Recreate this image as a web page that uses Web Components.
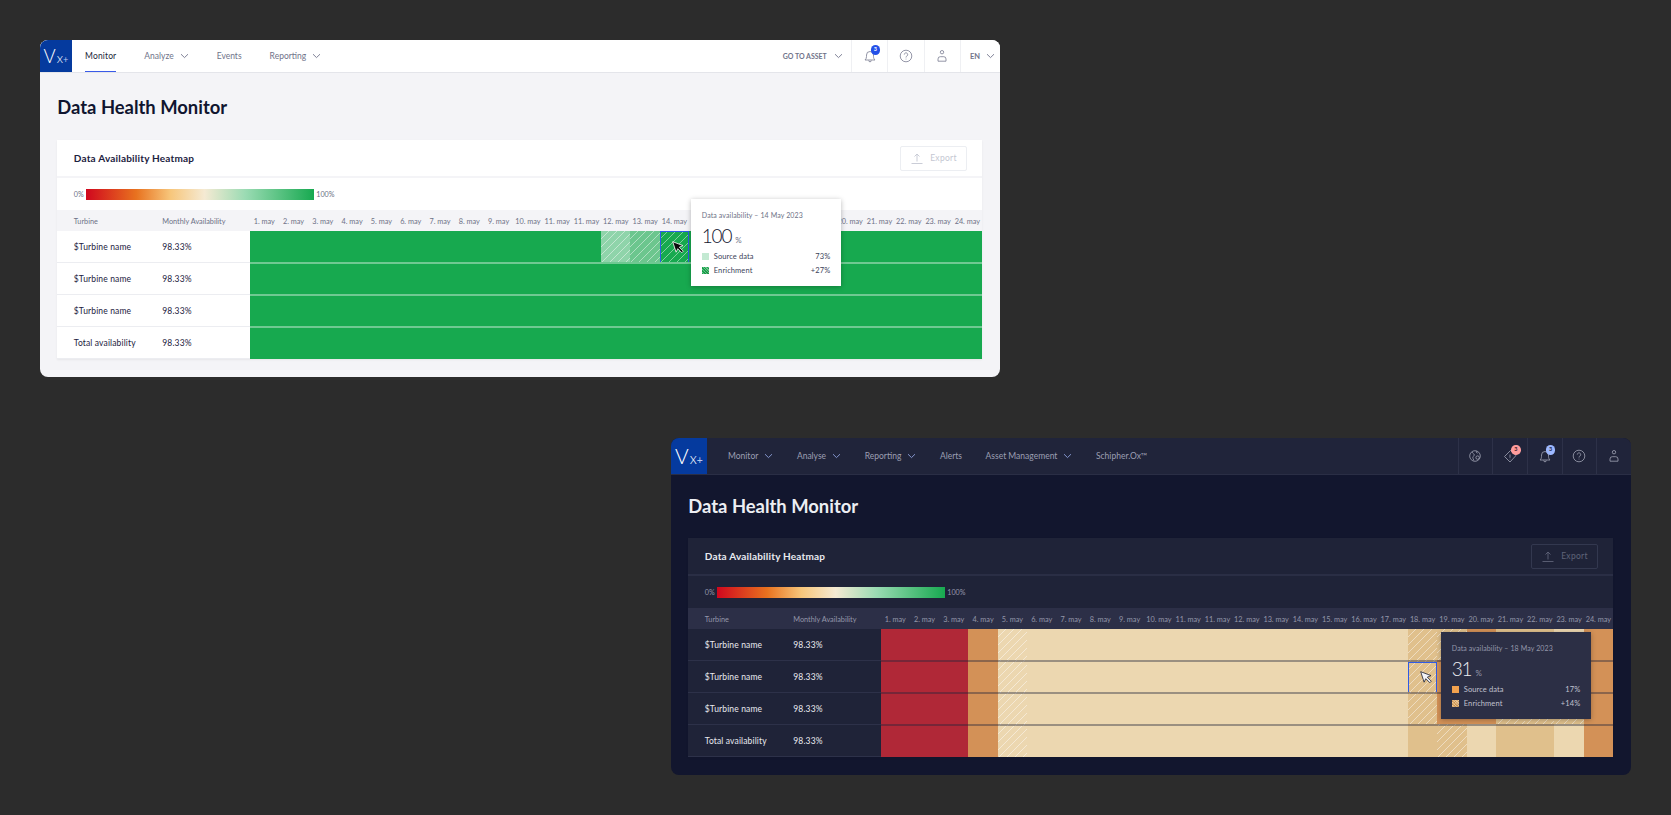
<!DOCTYPE html>
<html>
<head>
<meta charset="utf-8">
<style>
html,body{margin:0;height:815px;overflow:hidden;background:#2c2c2c;font-family:"Lato","Liberation Sans",sans-serif;}
</style>
</head>
<body>

<app-window theme="light" style="left:40px;top:40px">
  <top-nav slot="nav">
    <nav-link active>Monitor</nav-link>
    <nav-link menu>Analyze</nav-link>
    <nav-link>Events</nav-link>
    <nav-link menu>Reporting</nav-link>
    <asset-pick slot="tools">GO TO ASSET</asset-pick>
    <nav-tool slot="tools" icon="bell" badge="3"></nav-tool>
    <nav-tool slot="tools" icon="help"></nav-tool>
    <nav-tool slot="tools" icon="user"></nav-tool>
    <lang-pick slot="tools">EN</lang-pick>
  </top-nav>
  <page-title>Data Health Monitor</page-title>
  <heat-card heading="Data Availability Heatmap">
    <heat-row label="$Turbine name" value="98.33%" cells="ggggggggggggabSgggggggggg"></heat-row>
    <heat-row label="$Turbine name" value="98.33%" cells="ggggggggggggggggggggggggg"></heat-row>
    <heat-row label="$Turbine name" value="98.33%" cells="ggggggggggggggggggggggggg"></heat-row>
    <heat-row label="Total availability" value="98.33%" cells="ggggggggggggggggggggggggg"></heat-row>
    <data-tip slot="tip" style="left:634px;top:59px" day="14 May 2023" total="100" source="73%" extra="+27%"></data-tip>
  </heat-card>
</app-window>

<app-window theme="dark" style="left:671px;top:438px">
  <top-nav slot="nav">
    <nav-link menu>Monitor</nav-link>
    <nav-link menu>Analyse</nav-link>
    <nav-link menu>Reporting</nav-link>
    <nav-link>Alerts</nav-link>
    <nav-link menu>Asset Management</nav-link>
    <nav-link>Schipher.Ox™</nav-link>
    <nav-tool slot="tools" icon="globe"></nav-tool>
    <nav-tool slot="tools" icon="tag" badge="3" tone="red"></nav-tool>
    <nav-tool slot="tools" icon="bell" badge="3"></nav-tool>
    <nav-tool slot="tools" icon="help"></nav-tool>
    <nav-tool slot="tools" icon="user"></nav-tool>
  </top-nav>
  <page-title>Data Health Monitor</page-title>
  <heat-card heading="Data Availability Heatmap">
    <heat-row label="$Turbine name" value="98.33%" cells="rrrohcccccccccccccHHottco"></heat-row>
    <heat-row label="$Turbine name" value="98.33%" cells="rrrohcccccccccccccSoottco"></heat-row>
    <heat-row label="$Turbine name" value="98.33%" cells="rrrohcccccccccccccHooHHHo"></heat-row>
    <heat-row label="Total availability" value="98.33%" cells="rrrohccccccccccccctHcttco"></heat-row>
    <data-tip slot="tip" style="left:753px;top:94px" day="18 May 2023" total="31" source="17%" extra="+14%"></data-tip>
  </heat-card>
</app-window>

<mouse-arrow style="left:672px;top:241px"></mouse-arrow>
<mouse-arrow tone="white" style="left:1420px;top:671px"></mouse-arrow>

<script>
const DAYS = ['1','2','3','4','5','6','7','8','9','10','11','11','12','13','14','15','16','17','18','19','20','21','22','23','24'];
const COLS = 'grid-template-columns:105px 87.3px repeat(25,1fr);';

const ICONS = {
  bell:'<path d="M2 11c1-1 1.500-2 1.500-3.500V6a3.500 3.500 0 0 1 7 0v1.500c0 1.500.5 2.500 1.500 3.500z"/><path d="M5.700 11.500a1.300 1.300 0 0 0 2.600 0"/>',
  help:'<circle cx="7" cy="7" r="5.800"/><path d="M5.300 5.500a1.700 1.700 0 1 1 2.600 1.500c-.6.4-.9.7-.9 1.500"/><path d="M7 9.700v.7"/>',
  user:'<circle cx="7" cy="3.200" r="1.700"/><path d="M3 12.200v-2.200a2.300 2.300 0 0 1 2.300-2.300h3.400A2.300 2.300 0 0 1 11 10v2.200z"/>',
  globe:'<circle cx="7" cy="7" r="5.300"/><path d="M4 3c.5 1.500 2 1.500 2.300 2.800.2 1-1.300 1.200-1.500 2.400-.1.800.5 1.800 1 3.200"/><path d="M8.500 2.200c-.6 1 .1 1.800 1.200 1.900"/><circle cx="9.600" cy="8.600" r="1.700"/>',
  tag:'<path d="M7.500 1.500l5.500 5-6 6.500-5.500-5.500z"/><path d="M7 5.500v3.300M7 9.800v.5"/>'
};

const chevron = '<svg width="9" height="6" viewBox="0 0 9 6" fill="none" stroke="currentColor" stroke-width=".9"><path d="M1 1.200l3.500 3.400L8 1.200"/></svg>';

/* window, theme colours go down as custom properties */
class AppWindow extends HTMLElement{
  constructor(){
    super();
    this.attachShadow({mode:'open'}).innerHTML = `
    <style>
    :host{display:block;position:absolute;width:960px;height:337px;border-radius:8px;overflow:hidden;
      background:var(--page);color:var(--ink);font-family:"Lato","Liberation Sans",sans-serif;
      --page:#f4f4f7;--bar:#fff;--bar-line:#e4e5ea;--ink:#10152f;--nav:#70738a;--chev:#70738a;--tool:#70738a;--rule:#eff0f3;
      --card:#fff;--card-ink:#1c2140;--sep:#f4f4f7;--thead:#f4f4f7;--muted:#6d7186;--row-line:#ecedf1;
      --btn-line:#eceef2;--btn-ink:#c4c7d2;--tip:#fff;--tip-ink:#3b3f59;--sel:#17a94f;--badge:#2350e8;--badge-ink:#fff;
      --nav-h:32px;--nav-gap:28px;--nav-pad:13px;--tool-w:36.400px;--title-h:68px;--title-top:2px;--title-pad:0px;--heat-line:rgba(255,255,255,.38);}
    :host([theme=dark]){
      --page:#12162e;--bar:#20243a;--bar-line:#2a2e45;--ink:#eceef3;--nav:#9c9fb2;--chev:#8ea3de;--tool:#a9acbc;--rule:#2d3148;
      --card:#1f2338;--card-ink:#e9eaf0;--sep:#2a2e45;--thead:#2c2f47;--muted:#9497aa;--row-line:#2d3149;
      --btn-line:#33384f;--btn-ink:#5f6378;--tip:#2c2f45;--tip-ink:#c0c2cf;--sel:#e0c08c;--badge:#9db8ff;--badge-ink:#1b2040;
      --nav-h:36px;--nav-gap:23.600px;--nav-pad:21px;--tool-w:34.700px;--title-h:64px;--title-top:0px;--title-pad:1px;--heat-line:rgba(32,36,58,.4);}
    main{padding:0 18px 0 17.300px;}
    </style>
    <slot name="nav"></slot>
    <main><slot></slot></main>`;
  }
}

class TopNav extends HTMLElement{
  constructor(){
    super();
    this.attachShadow({mode:'open'}).innerHTML = `
    <style>
    :host{display:flex;align-items:stretch;height:var(--nav-h);background:var(--bar);box-shadow:0 1px 0 var(--bar-line);position:relative;}
    .logo{width:var(--nav-h);background:#053a9e;color:#fff;display:flex;align-items:baseline;justify-content:center;
      line-height:var(--nav-h);font-weight:300;font-size:calc(var(--nav-h) * .58);flex:none;}
    .logo i{font-style:normal;font-size:.72em;margin-left:1px;}
    .logo b{font-weight:400;font-size:.5em;color:#b9c8ee;}
    .links{display:flex;align-items:stretch;gap:var(--nav-gap);padding-left:var(--nav-pad);flex:1;}
    .tools{display:flex;align-items:stretch;}
    </style>
    <div class="logo">V<i>x</i><b>+</b></div>
    <div class="links"><slot></slot></div>
    <div class="tools"><slot name="tools"></slot></div>`;
  }
}

class NavLink extends HTMLElement{
  constructor(){
    super();
    this.attachShadow({mode:'open'}).innerHTML = `
    <style>
    :host{display:flex;align-items:center;gap:6px;font-size:8.500px;color:var(--nav);position:relative;white-space:nowrap;}
    :host([active]){color:#1a1f3a;letter-spacing:.15px;}
    :host([active])::after{content:"";position:absolute;left:0;right:0;bottom:0;height:1px;background:#3a5be8;}
    span{display:none;color:var(--chev);line-height:0;}
    :host([menu]) span{display:block;}
    </style>
    <slot></slot><span>${chevron}</span>`;
  }
}

class AssetPick extends HTMLElement{
  constructor(){
    super();
    this.attachShadow({mode:'open'}).innerHTML = `
    <style>
    :host{display:flex;align-items:center;gap:7px;padding-right:8px;font-size:7px;font-weight:700;color:var(--tool);}
    span{line-height:0;}
    </style>
    <slot></slot><span>${chevron}</span>`;
  }
}

class LangPick extends HTMLElement{
  constructor(){
    super();
    this.attachShadow({mode:'open'}).innerHTML = `
    <style>
    :host{display:flex;align-items:center;gap:6px;width:40px;box-sizing:border-box;padding-left:9px;border-left:1.500px solid var(--rule);font-size:7.500px;font-weight:700;color:var(--tool);}
    span{line-height:0;}
    </style>
    <slot></slot><span>${chevron}</span>`;
  }
}

class NavTool extends HTMLElement{
  constructor(){
    super();
    this.attachShadow({mode:'open'});
  }
  connectedCallback(){
    const badge = this.getAttribute('badge');
    this.shadowRoot.innerHTML = `
    <style>
    :host{display:flex;align-items:center;justify-content:center;width:var(--tool-w);box-sizing:border-box;border-left:1.500px solid var(--rule);color:var(--tool);position:relative;}
    svg{fill:none;stroke:currentColor;stroke-width:.75;}
    b{position:absolute;left:calc(50% + 1px);top:calc(50% - 11px);width:9.500px;height:9.500px;border-radius:50%;background:var(--badge);color:var(--badge-ink);
      font-size:5.500px;line-height:9.500px;text-align:center;font-weight:700;}
    :host([tone=red]) b{background:#ff9c9c;color:#3a1620;}
    </style>
    <svg width="14" height="14" viewBox="0 0 14 14">${ICONS[this.getAttribute('icon')]}</svg>
    ${badge ? `<b>${badge}</b>` : ''}`;
  }
}

class PageTitle extends HTMLElement{
  constructor(){
    super();
    this.attachShadow({mode:'open'}).innerHTML = `
    <style>
    :host{display:flex;align-items:center;height:var(--title-h);padding:var(--title-top) 0 var(--title-pad) 0;box-sizing:border-box;font-size:18.400px;font-weight:700;color:var(--ink);}
    </style>
    <slot></slot>`;
  }
}

class HeatCard extends HTMLElement{
  constructor(){
    super();
    this.attachShadow({mode:'open'});
  }
  connectedCallback(){
    const days = DAYS.map(d => `<span class="d">${d}. may</span>`).join('');
    this.shadowRoot.innerHTML = `
    <style>
    :host{display:block;position:relative;background:var(--card);box-shadow:0 1px 2px rgba(0,0,0,.06);}
    .head{display:flex;align-items:center;justify-content:space-between;height:36px;padding:0 15px 0 16.500px;border-bottom:2px solid var(--sep);}
    h2{margin:0;font-size:10px;font-weight:700;letter-spacing:.2px;color:var(--card-ink);}
    .btn{display:flex;align-items:center;gap:6px;width:67px;height:25px;box-sizing:border-box;justify-content:center;border:1px solid var(--btn-line);border-radius:2px;font-size:8.500px;letter-spacing:.3px;color:var(--btn-ink);}
    .btn svg{fill:none;stroke:currentColor;stroke-width:.9;}
    .legend{display:flex;align-items:center;gap:2px;height:32px;padding-left:16.500px;font-size:7.200px;color:var(--muted);}
    .bar{width:228.500px;height:11px;background:linear-gradient(90deg,#d0071e 0,#e8721f 22%,#f7c67b 37%,#f5ead3 52%,#9adbb3 70%,#17a950 100%);}
    .thead{display:grid;${COLS}align-items:center;height:21px;padding-top:1px;box-sizing:border-box;background:var(--thead);font-size:7.300px;color:var(--muted);}
    .first{padding-left:16.500px;}
    .d{text-align:center;white-space:nowrap;}
    </style>
    <div class="head">
      <h2>${this.getAttribute('heading')}</h2>
      <div class="btn">
        <svg width="14" height="14" viewBox="0 0 14 14"><path d="M7 10.500V3M4.500 5.500L7 3l2.500 2.500M1.500 12.500h11"/></svg>Export
      </div>
    </div>
    <div class="legend"><span>0%</span><div class="bar"></div><span>100%</span></div>
    <div class="thead"><span class="first">Turbine</span><span>Monthly Availability</span>${days}</div>
    <slot></slot>
    <slot name="tip"></slot>`;
  }
}

class HeatRow extends HTMLElement{
  constructor(){
    super();
    this.attachShadow({mode:'open'});
  }
  connectedCallback(){
    const cells = [...this.getAttribute('cells')].map(c => `<i class="${c}"></i>`).join('');
    this.shadowRoot.innerHTML = `
    <style>
    :host{display:grid;${COLS}height:32px;font-size:8.500px;letter-spacing:.14px;color:var(--card-ink);--hatch:repeating-linear-gradient(135deg,transparent 0 5px,rgba(255,255,255,.45) 5px 5.700px);}
    span{display:flex;align-items:center;padding-top:1px;box-sizing:border-box;border-bottom:1px solid var(--row-line);}
    .first{padding-left:16.500px;}
    i{display:block;}
    :host(:not(:first-child)) i{margin-top:-1px;border-top:2px solid var(--heat-line);}
    .g{background-color:#17a94f;}
    .a{background:var(--hatch),#8fd4aa;}
    .b{background:var(--hatch),#6cc68e;}
    .S{background:var(--hatch),var(--sel);box-shadow:inset 0 0 0 1px #2f5be6;}
    .r{background-color:#b02837;}
    .o{background-color:#d39157;}
    .c{background-color:#ecd7b0;}
    .t{background-color:#e0c08c;}
    .h{background:var(--hatch),#ecd7b0;}
    .H{background:var(--hatch),#e0c08c;}
    </style>
    <span class="first">${this.getAttribute('label')}</span><span>${this.getAttribute('value')}</span>${cells}`;
  }
}

class DataTip extends HTMLElement{
  constructor(){
    super();
    this.attachShadow({mode:'open'});
  }
  connectedCallback(){
    const a = n => this.getAttribute(n);
    const dark = this.closest('app-window').getAttribute('theme') === 'dark';
    this.shadowRoot.innerHTML = `
    <style>
    :host{display:block;position:absolute;width:150px;height:87px;box-sizing:border-box;padding:11px 11px 0 10.500px;background:var(--tip);color:var(--tip-ink);box-shadow:0 1px 5px rgba(0,0,0,.28);font-size:7.500px;letter-spacing:.1px;
      --src:${dark ? '#f2a24e' : '#c3e9d2'};--mix:${dark ? '#e0a862' : '#17a94f'};}
    .t{font-size:7px;letter-spacing:.12px;color:var(--muted);line-height:10px;}
    .n{display:flex;align-items:baseline;gap:4px;height:24px;line-height:24px;margin:4px 0 2px;font-size:19px;font-weight:300;color:var(--ink);letter-spacing:-1.200px;}
    .n small{font-size:8px;font-weight:400;color:var(--muted);letter-spacing:0;}
    .r{display:flex;align-items:center;height:13.500px;}
    .r i{width:7px;height:7px;margin-right:5px;background:var(--src);}
    .r:last-child i{background:repeating-linear-gradient(45deg,transparent 0 1px,rgba(255,255,255,.35) 1px 2px),repeating-linear-gradient(135deg,transparent 0 1px,rgba(60,40,20,.18) 1px 2px),var(--mix);}
    .r b{margin-left:auto;font-weight:400;}
    </style>
    <div class="t">Data availability – ${a('day')}</div>
    <div class="n">${a('total')} <small>%</small></div>
    <div class="r"><i></i>Source data<b>${a('source')}</b></div>
    <div class="r"><i></i>Enrichment<b>${a('extra')}</b></div>`;
  }
}

class MouseArrow extends HTMLElement{
  constructor(){
    super();
    this.attachShadow({mode:'open'});
  }
  connectedCallback(){
    const white = this.getAttribute('tone') === 'white';
    this.shadowRoot.innerHTML = `
    <style>:host{display:block;position:absolute;width:13px;height:13px;line-height:0;}</style>
    <svg width="13" height="13" viewBox="0 0 13 13">
      <path d="M.7.7L11 4.600 7.300 6.200l4 4-1.500 1.500-4-4-1.700 3.500z" fill="${white ? '#f2f3f7' : '#0c0c0c'}" stroke="${white ? '#1b1f35' : '#fff'}" stroke-width=".8"/>
    </svg>`;
  }
}

customElements.define('app-window',AppWindow);
customElements.define('top-nav',TopNav);
customElements.define('nav-link',NavLink);
customElements.define('asset-pick',AssetPick);
customElements.define('lang-pick',LangPick);
customElements.define('nav-tool',NavTool);
customElements.define('page-title',PageTitle);
customElements.define('heat-card',HeatCard);
customElements.define('heat-row',HeatRow);
customElements.define('data-tip',DataTip);
customElements.define('mouse-arrow',MouseArrow);
</script>
</body>
</html>
